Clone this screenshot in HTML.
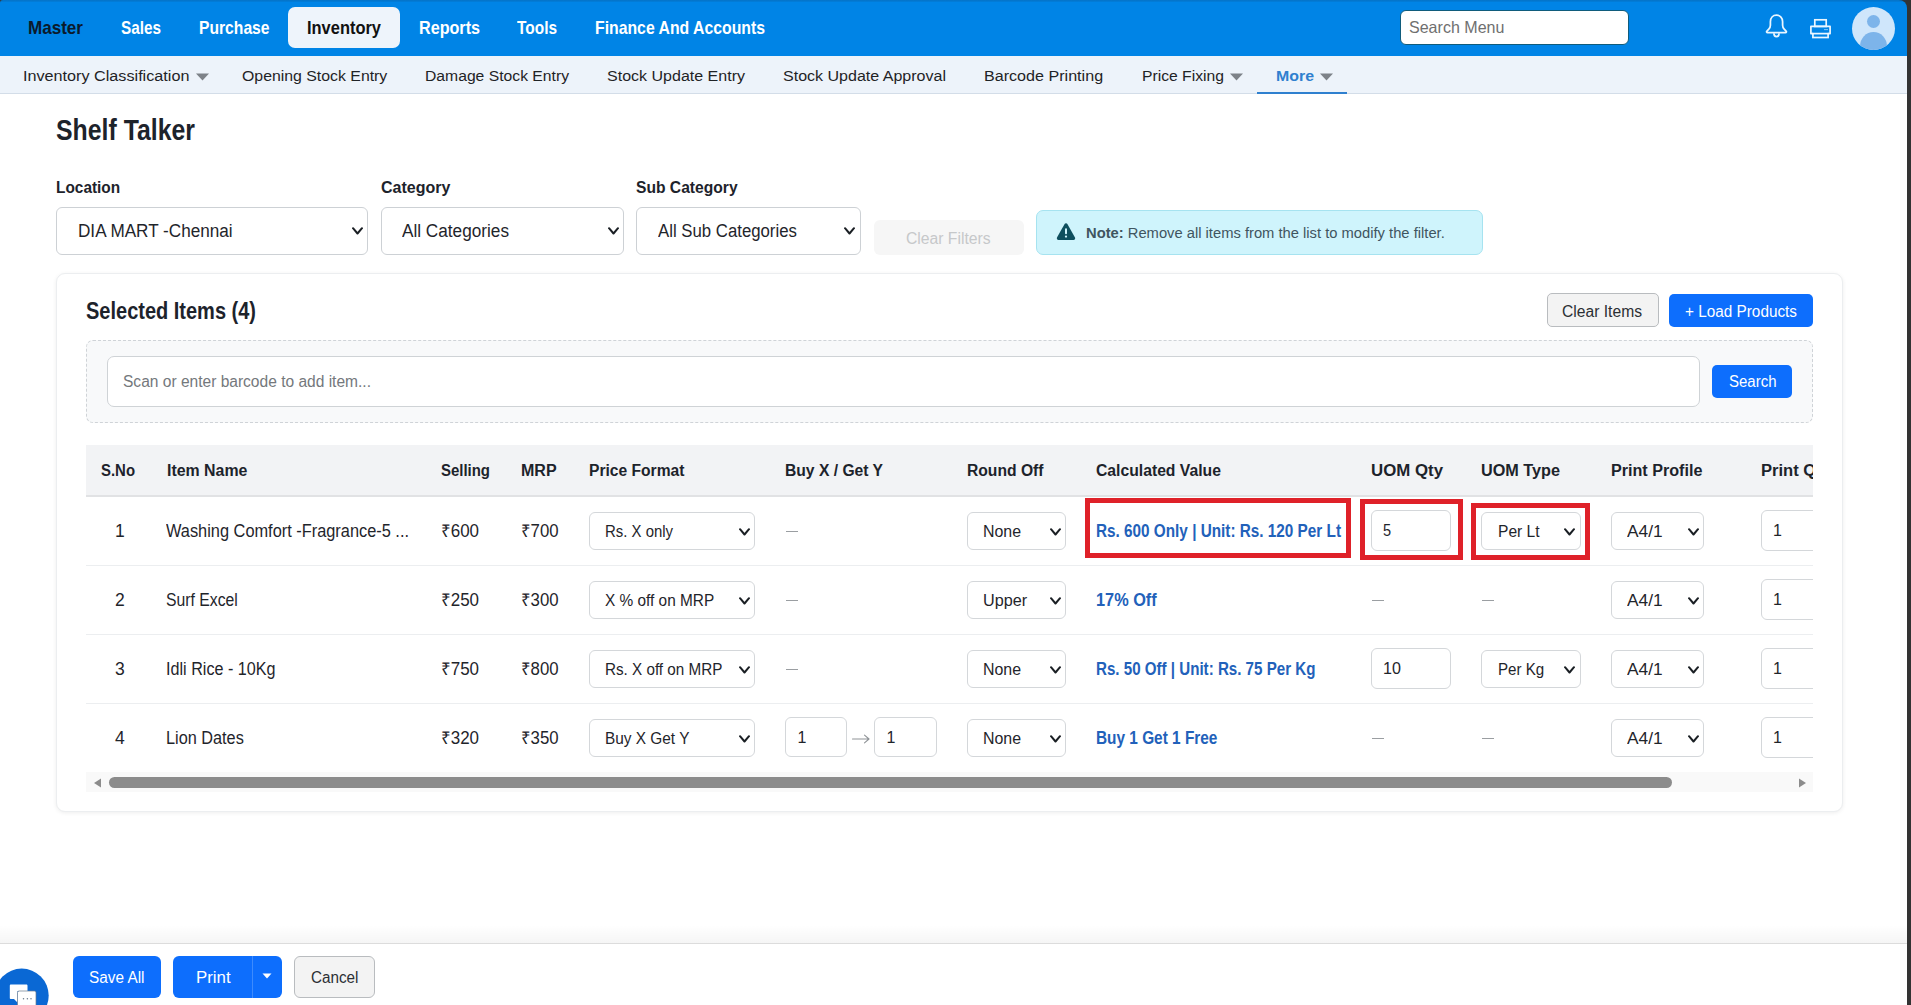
<!DOCTYPE html><html><head><meta charset="utf-8"><title>Shelf Talker</title>
<style>
html,body{margin:0;padding:0;}
body{width:1911px;height:1005px;overflow:hidden;position:relative;background:#fff;font-family:"Liberation Sans",sans-serif;}
.b{position:absolute;}
.t{position:absolute;white-space:nowrap;line-height:1;transform-origin:0 0;}
</style></head><body>
<div class="b" style="left:0px;top:0px;width:6px;height:6px;background:#3a3a3a;"></div>
<div class="b" style="left:1897px;top:0px;width:14px;height:12px;background:#333;"></div>
<div class="b" style="left:0px;top:0px;width:1907px;height:56px;background:#0084e6;border-top-right-radius:8px;border-top-left-radius:3px;"></div>
<div class="b" style="left:1907px;top:0px;width:4px;height:1005px;background:#333;"></div>
<div class="b" style="left:0px;top:0px;width:1907px;height:2px;background:linear-gradient(to bottom,rgba(20,60,100,0.25),rgba(20,60,100,0.08));border-top-right-radius:8px;"></div>
<div class="b" style="left:288px;top:7px;width:112px;height:41px;background:#eef4fb;border-radius:7px;"></div>
<div class="t" style="left: 28px; top: 19.34px; font-size: 18.5px; font-weight: 700; color: rgb(11, 26, 44); transform: scaleX(0.9222);">Master</div>
<div class="t" style="left: 121px; top: 19.34px; font-size: 18.5px; font-weight: 700; color: rgb(255, 255, 255); transform: scaleX(0.8271);">Sales</div>
<div class="t" style="left: 198.5px; top: 19.34px; font-size: 18.5px; font-weight: 700; color: rgb(255, 255, 255); transform: scaleX(0.8464);">Purchase</div>
<div class="t" style="left: 307px; top: 19.34px; font-size: 18.5px; font-weight: 700; color: rgb(17, 17, 17); transform: scaleX(0.8886);">Inventory</div>
<div class="t" style="left: 419px; top: 19.34px; font-size: 18.5px; font-weight: 700; color: rgb(255, 255, 255); transform: scaleX(0.8726);">Reports</div>
<div class="t" style="left: 517px; top: 19.34px; font-size: 18.5px; font-weight: 700; color: rgb(255, 255, 255); transform: scaleX(0.8339);">Tools</div>
<div class="t" style="left: 595px; top: 19.34px; font-size: 18.5px; font-weight: 700; color: rgb(255, 255, 255); transform: scaleX(0.8539);">Finance And Accounts</div>
<div class="b" style="left:1400px;top:10px;width:228.5px;height:34.5px;background:#fff;border:1.3px solid #105c7c;border-radius:6px;box-sizing:border-box;"></div>
<div class="t" style="left: 1408.6px; top: 19.43px; font-size: 16.5px; font-weight: 400; color: rgb(111, 111, 111); transform: scaleX(0.9721);">Search Menu</div>
<svg class="b" style="left:1763px;top:13px" width="27" height="27" viewBox="0 0 27 27"><path d="M13.5 2.2c-3.7 0-6.1 2.9-6.1 6.5v3.6c0 1.4-.6 2.8-1.6 3.9l-1.9 2c-.6.6-.2 1.4.6 1.4h18c.8 0 1.2-.8.6-1.4l-1.9-2c-1-1.1-1.6-2.5-1.6-3.9V8.7c0-3.6-2.4-6.5-6.1-6.5z" fill="none" stroke="#eaf6ff" stroke-width="1.75"></path><path d="M10.9 20.3c0 1.9 1.2 3.3 2.6 3.3s2.6-1.4 2.6-3.3" fill="none" stroke="#eaf6ff" stroke-width="1.75"></path></svg>
<svg class="b" style="left:1808px;top:17px" width="25" height="23" viewBox="0 0 25 23"><rect x="6.8" y="2.8" width="11.4" height="6.6" fill="none" stroke="#eaf6ff" stroke-width="1.7"></rect><path d="M5.2 16.6H2.9V9.4h19.2v7.2h-2.3" fill="none" stroke="#eaf6ff" stroke-width="1.7" stroke-linejoin="round"></path><rect x="4.9" y="16.6" width="15.2" height="3.9" fill="none" stroke="#eaf6ff" stroke-width="1.7"></rect><circle cx="17" cy="12.6" r=".7" fill="#eaf6ff"></circle><circle cx="19" cy="12.6" r=".7" fill="#eaf6ff"></circle></svg>
<div class="b" style="left:1852px;top:7px;width:43px;height:43px;border-radius:50%;overflow:hidden;background:#cfe6fb"><div class="b" style="left:14.9px;top:7.8px;width:13.2px;height:13.2px;border-radius:50%;background:#7db4ea"></div><div class="b" style="left:7.7px;top:25px;width:27.6px;height:29px;border-radius:50%;background:#7db4ea"></div></div>
<div class="b" style="left:0px;top:56px;width:1907px;height:37px;background:#edf3fa;"></div>
<div class="b" style="left:0px;top:93px;width:1907px;height:1px;background:#d3dde8;"></div>
<div class="t" style="left: 22.6px; top: 68.48px; font-size: 15.5px; font-weight: 400; color: rgb(31, 35, 38); transform: scaleX(1.0441);">Inventory Classification</div>
<div class="t" style="left: 241.7px; top: 68.48px; font-size: 15.5px; font-weight: 400; color: rgb(31, 35, 38); transform: scaleX(1.022);">Opening Stock Entry</div>
<div class="t" style="left: 425px; top: 68.48px; font-size: 15.5px; font-weight: 400; color: rgb(31, 35, 38); transform: scaleX(1.013);">Damage Stock Entry</div>
<div class="t" style="left: 607px; top: 68.48px; font-size: 15.5px; font-weight: 400; color: rgb(31, 35, 38); transform: scaleX(1.0333);">Stock Update Entry</div>
<div class="t" style="left: 783px; top: 68.48px; font-size: 15.5px; font-weight: 400; color: rgb(31, 35, 38); transform: scaleX(1.0337);">Stock Update Approval</div>
<div class="t" style="left: 984.4px; top: 68.48px; font-size: 15.5px; font-weight: 400; color: rgb(31, 35, 38); transform: scaleX(1.0393);">Barcode Printing</div>
<div class="t" style="left: 1142px; top: 68.48px; font-size: 15.5px; font-weight: 400; color: rgb(31, 35, 38); transform: scaleX(1.0127);">Price Fixing</div>
<div class="t" style="left: 1276px; top: 68.48px; font-size: 15.5px; font-weight: 700; color: rgb(47, 128, 207); transform: scaleX(1.0257);">More</div>
<svg class="b" style="left:195.5px;top:72.5px" width="13" height="8" viewBox="0 0 13 8"><path d="M0 0.5h13L6.5 7.5z" fill="#7d8288"></path></svg>
<svg class="b" style="left:1229.5px;top:72.5px" width="13" height="8" viewBox="0 0 13 8"><path d="M0 0.5h13L6.5 7.5z" fill="#7d8288"></path></svg>
<svg class="b" style="left:1320px;top:72.5px" width="13" height="8" viewBox="0 0 13 8"><path d="M0 0.5h13L6.5 7.5z" fill="#7d8288"></path></svg>
<div class="b" style="left:1257px;top:92px;width:90px;height:2px;background:#2f80cf;"></div>
<div class="t" style="left: 56px; top: 115.23px; font-size: 29.5px; font-weight: 700; color: rgb(29, 35, 43); transform: scaleX(0.8422);">Shelf Talker</div>
<div class="t" style="left: 55.8px; top: 179.33px; font-size: 16.5px; font-weight: 700; color: rgb(29, 35, 43); transform: scaleX(0.9338);">Location</div>
<div class="t" style="left: 381px; top: 179.33px; font-size: 16.5px; font-weight: 700; color: rgb(29, 35, 43); transform: scaleX(0.9702);">Category</div>
<div class="t" style="left: 636px; top: 179.33px; font-size: 16.5px; font-weight: 700; color: rgb(29, 35, 43); transform: scaleX(0.947);">Sub Category</div>
<div class="b" style="left:56px;top:207px;width:311.5px;height:47.5px;background:#fff;border:1px solid #cdd1d5;border-radius:6px;box-sizing:border-box;"></div>
<div class="t" style="left: 77.7px; top: 222.06px; font-size: 18px; font-weight: 400; color: rgb(31, 37, 43); transform: scaleX(0.9519);">DIA MART -Chennai</div>
<svg class="b" style="left:351.5px;top:226.5px" width="11" height="8" viewBox="0 0 11 8"><path d="M1 1.2 L5.5 6.5 L10 1.2" fill="none" stroke="#1a1f24" stroke-width="2.0" stroke-linecap="round" stroke-linejoin="round"></path></svg>
<div class="b" style="left:381px;top:207px;width:242.5px;height:47.5px;background:#fff;border:1px solid #cdd1d5;border-radius:6px;box-sizing:border-box;"></div>
<div class="t" style="left: 402px; top: 222.06px; font-size: 18px; font-weight: 400; color: rgb(31, 37, 43); transform: scaleX(0.9548);">All Categories</div>
<svg class="b" style="left:607.5px;top:226.5px" width="11" height="8" viewBox="0 0 11 8"><path d="M1 1.2 L5.5 6.5 L10 1.2" fill="none" stroke="#1a1f24" stroke-width="2.0" stroke-linecap="round" stroke-linejoin="round"></path></svg>
<div class="b" style="left:636px;top:207px;width:224.5px;height:47.5px;background:#fff;border:1px solid #cdd1d5;border-radius:6px;box-sizing:border-box;"></div>
<div class="t" style="left: 657.7px; top: 222.06px; font-size: 18px; font-weight: 400; color: rgb(31, 37, 43); transform: scaleX(0.9316);">All Sub Categories</div>
<svg class="b" style="left:844px;top:226.5px" width="11" height="8" viewBox="0 0 11 8"><path d="M1 1.2 L5.5 6.5 L10 1.2" fill="none" stroke="#1a1f24" stroke-width="2.0" stroke-linecap="round" stroke-linejoin="round"></path></svg>
<div class="b" style="left:873.5px;top:220px;width:150.5px;height:35px;background:#f6f6f6;border-radius:6px;"></div>
<div class="t" style="left: 906.4px; top: 231.06px; font-size: 16px; font-weight: 400; color: rgb(198, 200, 202); transform: scaleX(0.981);">Clear Filters</div>
<div class="b" style="left:1036px;top:210px;width:447px;height:44.5px;background:#cff4fc;border:1px solid #a6e3f0;border-radius:7px;box-sizing:border-box;"></div>
<svg class="b" style="left:1056px;top:222px" width="20" height="19" viewBox="0 0 20 19"><path d="M10 1.2c.6 0 1.1.3 1.4.8l7.6 13.6c.6 1.1-.1 2.4-1.4 2.4H2.4C1.1 18 .4 16.7 1 15.6L8.6 2c.3-.5.8-.8 1.4-.8z" fill="#0e4f5e"></path><rect x="9" y="6.3" width="2" height="6" rx="1" fill="#cff4fc"></rect><circle cx="10" cy="14.6" r="1.15" fill="#cff4fc"></circle></svg>
<div class="t" style="left: 1085.8px; top: 225.18px; font-size: 15.5px; font-weight: 400; color: rgb(63, 85, 96); transform: scaleX(0.951);"><b>Note:</b> Remove all items from the list to modify the filter.</div>
<div class="b" style="left:56px;top:273px;width:1787px;height:539px;background:#fff;border:1px solid #eceef0;border-radius:9px;box-sizing:border-box;box-shadow:0 1px 4px rgba(0,0,0,0.07);"></div>
<div class="t" style="left: 86px; top: 298.58px; font-size: 24px; font-weight: 700; color: rgb(29, 35, 43); transform: scaleX(0.833);">Selected Items (4)</div>
<div class="b" style="left:1546.5px;top:293px;width:112.5px;height:33.5px;background:#f3f3f3;border:1px solid #b9bcbf;border-radius:5px;box-sizing:border-box;"></div>
<div class="t" style="left: 1562px; top: 303.96px; font-size: 16px; font-weight: 400; color: rgb(43, 47, 51); transform: scaleX(0.978);">Clear Items</div>
<div class="b" style="left:1669px;top:294px;width:144px;height:33px;background:#0d6efd;border-radius:5px;"></div>
<div class="t" style="left: 1685px; top: 303.56px; font-size: 16px; font-weight: 400; color: rgb(255, 255, 255); transform: scaleX(0.9575);">+ Load Products</div>
<div class="b" style="left:86px;top:340px;width:1727px;height:82.5px;background:#f8f9fa;border:1px dashed #cfd3d7;border-radius:7px;box-sizing:border-box;"></div>
<div class="b" style="left:107px;top:356px;width:1593px;height:51px;background:#fff;border:1px solid #cfd3d6;border-radius:7px;box-sizing:border-box;"></div>
<div class="t" style="left: 123px; top: 373.96px; font-size: 16px; font-weight: 400; color: rgb(116, 120, 124); transform: scaleX(0.9715);">Scan or enter barcode to add item...</div>
<div class="b" style="left:1712px;top:365px;width:80px;height:33px;background:#0d6efd;border-radius:5px;"></div>
<div class="t" style="left: 1728.5px; top: 374.06px; font-size: 16px; font-weight: 400; color: rgb(255, 255, 255); transform: scaleX(0.9368);">Search</div>
<div class="b" style="left:86px;top:445px;width:1727px;height:347px;overflow:hidden">
<div class="b" style="left:-86px;top:-445px;width:1911px;height:1005px">
<div class="b" style="left:86px;top:445px;width:1727px;height:50px;background:#f2f3f5;"></div>
<div class="b" style="left:86px;top:495px;width:1727px;height:2px;background:#e1e2e4;"></div>
<div class="b" style="left:86px;top:565px;width:1727px;height:1px;background:#eceef0;"></div>
<div class="b" style="left:86px;top:634px;width:1727px;height:1px;background:#eceef0;"></div>
<div class="b" style="left:86px;top:703px;width:1727px;height:1px;background:#eceef0;"></div>
<div class="b" style="left:86px;top:772px;width:1727px;height:1px;background:#eceef0;"></div>
<div class="t" style="left: 101px; top: 463.06px; font-size: 16px; font-weight: 700; color: rgb(29, 35, 43); transform: scaleX(0.9327);">S.No</div>
<div class="t" style="left: 166.6px; top: 463.06px; font-size: 16px; font-weight: 700; color: rgb(29, 35, 43); transform: scaleX(0.9936);">Item Name</div>
<div class="t" style="left: 441px; top: 463.06px; font-size: 16px; font-weight: 700; color: rgb(29, 35, 43); transform: scaleX(0.9342);">Selling</div>
<div class="t" style="left: 521px; top: 463.06px; font-size: 16px; font-weight: 700; color: rgb(29, 35, 43); transform: scaleX(1.0011);">MRP</div>
<div class="t" style="left: 589px; top: 463.06px; font-size: 16px; font-weight: 700; color: rgb(29, 35, 43); transform: scaleX(0.9753);">Price Format</div>
<div class="t" style="left: 785px; top: 463.06px; font-size: 16px; font-weight: 700; color: rgb(29, 35, 43); transform: scaleX(0.9782);">Buy X / Get Y</div>
<div class="t" style="left: 967px; top: 463.06px; font-size: 16px; font-weight: 700; color: rgb(29, 35, 43); transform: scaleX(0.9782);">Round Off</div>
<div class="t" style="left: 1095.8px; top: 463.06px; font-size: 16px; font-weight: 700; color: rgb(29, 35, 43); transform: scaleX(0.9821);">Calculated Value</div>
<div class="t" style="left: 1371px; top: 463.06px; font-size: 16px; font-weight: 700; color: rgb(29, 35, 43); transform: scaleX(1.0518);">UOM Qty</div>
<div class="t" style="left: 1481px; top: 463.06px; font-size: 16px; font-weight: 700; color: rgb(29, 35, 43); transform: scaleX(1.0136);">UOM Type</div>
<div class="t" style="left: 1611px; top: 463.06px; font-size: 16px; font-weight: 700; color: rgb(29, 35, 43); transform: scaleX(1.0079);">Print Profile</div>
<div class="t" style="left: 1761px; top: 463.06px; font-size: 16px; font-weight: 700; color: rgb(29, 35, 43); transform: scaleX(1.0361);">Print Qty</div>
<div class="t" style="left:115px;top:522.79px;font-size:17.5px;font-weight:400;color:#1f252b;">1</div>
<div class="t" style="left: 166px; top: 522.79px; font-size: 17.5px; font-weight: 400; color: rgb(31, 37, 43); transform: scaleX(0.9346);">Washing Comfort -Fragrance-5 ...</div>
<div class="t" style="left: 441px; top: 522.79px; font-size: 17.5px; font-weight: 400; color: rgb(31, 37, 43); transform: scaleX(0.9693);">₹600</div>
<div class="t" style="left: 521px; top: 522.79px; font-size: 17.5px; font-weight: 400; color: rgb(31, 37, 43); transform: scaleX(0.9591);">₹700</div>
<div class="b" style="left:589px;top:512px;width:166px;height:38px;background:#fff;border:1px solid #d4d7da;border-radius:6px;box-sizing:border-box;"></div>
<div class="t" style="left: 605.4px; top: 523.21px; font-size: 17px; font-weight: 400; color: rgb(31, 37, 43); transform: scaleX(0.8789);">Rs. X only</div>
<svg class="b" style="left:738.5px;top:527.5px" width="11" height="8" viewBox="0 0 11 8"><path d="M1 1.2 L5.5 6.5 L10 1.2" fill="none" stroke="#1a1f24" stroke-width="2.0" stroke-linecap="round" stroke-linejoin="round"></path></svg>
<div class="b" style="left:786px;top:531px;width:12px;height:1px;background:#9a9ea2;"></div>
<div class="b" style="left:967px;top:512px;width:99px;height:38px;background:#fff;border:1px solid #d4d7da;border-radius:6px;box-sizing:border-box;"></div>
<div class="t" style="left: 983.4px; top: 523.21px; font-size: 17px; font-weight: 400; color: rgb(31, 37, 43); transform: scaleX(0.9375);">None</div>
<svg class="b" style="left:1049.5px;top:527.5px" width="11" height="8" viewBox="0 0 11 8"><path d="M1 1.2 L5.5 6.5 L10 1.2" fill="none" stroke="#1a1f24" stroke-width="2.0" stroke-linecap="round" stroke-linejoin="round"></path></svg>
<div class="t" style="left: 1096px; top: 522.79px; font-size: 17.5px; font-weight: 700; color: rgb(34, 97, 186); transform: scaleX(0.8746);">Rs. 600 Only | Unit: Rs. 120 Per Lt</div>
<div class="b" style="left:1371px;top:510px;width:80px;height:41px;background:#fff;border:1px solid #d4d7da;border-radius:6px;box-sizing:border-box;"></div>
<div class="t" style="left: 1382.6px; top: 522.56px; font-size: 16px; font-weight: 400; color: rgb(31, 37, 43); transform: scaleX(0.9095);">5</div>
<div class="b" style="left:1481px;top:512px;width:100px;height:38px;background:#fff;border:1px solid #d4d7da;border-radius:6px;box-sizing:border-box;"></div>
<div class="t" style="left: 1497.7px; top: 523.21px; font-size: 17px; font-weight: 400; color: rgb(31, 37, 43); transform: scaleX(0.9171);">Per Lt</div>
<svg class="b" style="left:1564px;top:527.5px" width="11" height="8" viewBox="0 0 11 8"><path d="M1 1.2 L5.5 6.5 L10 1.2" fill="none" stroke="#1a1f24" stroke-width="2.0" stroke-linecap="round" stroke-linejoin="round"></path></svg>
<div class="b" style="left:1611px;top:512px;width:93px;height:38px;background:#fff;border:1px solid #d4d7da;border-radius:6px;box-sizing:border-box;"></div>
<div class="t" style="left: 1627px; top: 523.21px; font-size: 17px; font-weight: 400; color: rgb(31, 37, 43); transform: scaleX(1.0176);">A4/1</div>
<svg class="b" style="left:1687.5px;top:527.5px" width="11" height="8" viewBox="0 0 11 8"><path d="M1 1.2 L5.5 6.5 L10 1.2" fill="none" stroke="#1a1f24" stroke-width="2.0" stroke-linecap="round" stroke-linejoin="round"></path></svg>
<div class="b" style="left:1761px;top:510px;width:89px;height:41px;background:#fff;border:1px solid #d4d7da;border-radius:6px;box-sizing:border-box;"></div>
<div class="t" style="left:1773px;top:522.56px;font-size:16px;font-weight:400;color:#1f252b;">1</div>
<div class="t" style="left:115px;top:591.79px;font-size:17.5px;font-weight:400;color:#1f252b;">2</div>
<div class="t" style="left: 166px; top: 591.79px; font-size: 17.5px; font-weight: 400; color: rgb(31, 37, 43); transform: scaleX(0.9003);">Surf Excel</div>
<div class="t" style="left: 441px; top: 591.79px; font-size: 17.5px; font-weight: 400; color: rgb(31, 37, 43); transform: scaleX(0.9693);">₹250</div>
<div class="t" style="left: 521px; top: 591.79px; font-size: 17.5px; font-weight: 400; color: rgb(31, 37, 43); transform: scaleX(0.9591);">₹300</div>
<div class="b" style="left:589px;top:581px;width:166px;height:38px;background:#fff;border:1px solid #d4d7da;border-radius:6px;box-sizing:border-box;"></div>
<div class="t" style="left: 605.4px; top: 592.21px; font-size: 17px; font-weight: 400; color: rgb(31, 37, 43); transform: scaleX(0.9052);">X % off on MRP</div>
<svg class="b" style="left:738.5px;top:596.5px" width="11" height="8" viewBox="0 0 11 8"><path d="M1 1.2 L5.5 6.5 L10 1.2" fill="none" stroke="#1a1f24" stroke-width="2.0" stroke-linecap="round" stroke-linejoin="round"></path></svg>
<div class="b" style="left:786px;top:600px;width:12px;height:1px;background:#9a9ea2;"></div>
<div class="b" style="left:967px;top:581px;width:99px;height:38px;background:#fff;border:1px solid #d4d7da;border-radius:6px;box-sizing:border-box;"></div>
<div class="t" style="left: 983.4px; top: 592.21px; font-size: 17px; font-weight: 400; color: rgb(31, 37, 43); transform: scaleX(0.9522);">Upper</div>
<svg class="b" style="left:1049.5px;top:596.5px" width="11" height="8" viewBox="0 0 11 8"><path d="M1 1.2 L5.5 6.5 L10 1.2" fill="none" stroke="#1a1f24" stroke-width="2.0" stroke-linecap="round" stroke-linejoin="round"></path></svg>
<div class="t" style="left: 1096px; top: 591.79px; font-size: 17.5px; font-weight: 700; color: rgb(34, 97, 186); transform: scaleX(0.9316);">17% Off</div>
<div class="b" style="left:1372px;top:600px;width:12px;height:1px;background:#9a9ea2;"></div>
<div class="b" style="left:1482px;top:600px;width:12px;height:1px;background:#9a9ea2;"></div>
<div class="b" style="left:1611px;top:581px;width:93px;height:38px;background:#fff;border:1px solid #d4d7da;border-radius:6px;box-sizing:border-box;"></div>
<div class="t" style="left: 1627px; top: 592.21px; font-size: 17px; font-weight: 400; color: rgb(31, 37, 43); transform: scaleX(1.0176);">A4/1</div>
<svg class="b" style="left:1687.5px;top:596.5px" width="11" height="8" viewBox="0 0 11 8"><path d="M1 1.2 L5.5 6.5 L10 1.2" fill="none" stroke="#1a1f24" stroke-width="2.0" stroke-linecap="round" stroke-linejoin="round"></path></svg>
<div class="b" style="left:1761px;top:579px;width:89px;height:41px;background:#fff;border:1px solid #d4d7da;border-radius:6px;box-sizing:border-box;"></div>
<div class="t" style="left:1773px;top:591.56px;font-size:16px;font-weight:400;color:#1f252b;">1</div>
<div class="t" style="left:115px;top:660.79px;font-size:17.5px;font-weight:400;color:#1f252b;">3</div>
<div class="t" style="left: 166px; top: 660.79px; font-size: 17.5px; font-weight: 400; color: rgb(31, 37, 43); transform: scaleX(0.9227);">Idli Rice - 10Kg</div>
<div class="t" style="left: 441px; top: 660.79px; font-size: 17.5px; font-weight: 400; color: rgb(31, 37, 43); transform: scaleX(0.9693);">₹750</div>
<div class="t" style="left: 521px; top: 660.79px; font-size: 17.5px; font-weight: 400; color: rgb(31, 37, 43); transform: scaleX(0.9591);">₹800</div>
<div class="b" style="left:589px;top:650px;width:166px;height:38px;background:#fff;border:1px solid #d4d7da;border-radius:6px;box-sizing:border-box;"></div>
<div class="t" style="left: 605.4px; top: 661.21px; font-size: 17px; font-weight: 400; color: rgb(31, 37, 43); transform: scaleX(0.8953);">Rs. X off on MRP</div>
<svg class="b" style="left:738.5px;top:665.5px" width="11" height="8" viewBox="0 0 11 8"><path d="M1 1.2 L5.5 6.5 L10 1.2" fill="none" stroke="#1a1f24" stroke-width="2.0" stroke-linecap="round" stroke-linejoin="round"></path></svg>
<div class="b" style="left:786px;top:669px;width:12px;height:1px;background:#9a9ea2;"></div>
<div class="b" style="left:967px;top:650px;width:99px;height:38px;background:#fff;border:1px solid #d4d7da;border-radius:6px;box-sizing:border-box;"></div>
<div class="t" style="left: 983.4px; top: 661.21px; font-size: 17px; font-weight: 400; color: rgb(31, 37, 43); transform: scaleX(0.9375);">None</div>
<svg class="b" style="left:1049.5px;top:665.5px" width="11" height="8" viewBox="0 0 11 8"><path d="M1 1.2 L5.5 6.5 L10 1.2" fill="none" stroke="#1a1f24" stroke-width="2.0" stroke-linecap="round" stroke-linejoin="round"></path></svg>
<div class="t" style="left: 1096px; top: 660.79px; font-size: 17.5px; font-weight: 700; color: rgb(34, 97, 186); transform: scaleX(0.8643);">Rs. 50 Off | Unit: Rs. 75 Per Kg</div>
<div class="b" style="left:1371px;top:648px;width:80px;height:41px;background:#fff;border:1px solid #d4d7da;border-radius:6px;box-sizing:border-box;"></div>
<div class="t" style="left: 1382.6px; top: 660.56px; font-size: 16px; font-weight: 400; color: rgb(31, 37, 43); transform: scaleX(1.0058);">10</div>
<div class="b" style="left:1481px;top:650px;width:100px;height:38px;background:#fff;border:1px solid #d4d7da;border-radius:6px;box-sizing:border-box;"></div>
<div class="t" style="left: 1497.7px; top: 661.21px; font-size: 17px; font-weight: 400; color: rgb(31, 37, 43); transform: scaleX(0.8907);">Per Kg</div>
<svg class="b" style="left:1564px;top:665.5px" width="11" height="8" viewBox="0 0 11 8"><path d="M1 1.2 L5.5 6.5 L10 1.2" fill="none" stroke="#1a1f24" stroke-width="2.0" stroke-linecap="round" stroke-linejoin="round"></path></svg>
<div class="b" style="left:1611px;top:650px;width:93px;height:38px;background:#fff;border:1px solid #d4d7da;border-radius:6px;box-sizing:border-box;"></div>
<div class="t" style="left: 1627px; top: 661.21px; font-size: 17px; font-weight: 400; color: rgb(31, 37, 43); transform: scaleX(1.0176);">A4/1</div>
<svg class="b" style="left:1687.5px;top:665.5px" width="11" height="8" viewBox="0 0 11 8"><path d="M1 1.2 L5.5 6.5 L10 1.2" fill="none" stroke="#1a1f24" stroke-width="2.0" stroke-linecap="round" stroke-linejoin="round"></path></svg>
<div class="b" style="left:1761px;top:648px;width:89px;height:41px;background:#fff;border:1px solid #d4d7da;border-radius:6px;box-sizing:border-box;"></div>
<div class="t" style="left:1773px;top:660.56px;font-size:16px;font-weight:400;color:#1f252b;">1</div>
<div class="t" style="left:115px;top:729.79px;font-size:17.5px;font-weight:400;color:#1f252b;">4</div>
<div class="t" style="left: 166px; top: 729.79px; font-size: 17.5px; font-weight: 400; color: rgb(31, 37, 43); transform: scaleX(0.9298);">Lion Dates</div>
<div class="t" style="left: 441px; top: 729.79px; font-size: 17.5px; font-weight: 400; color: rgb(31, 37, 43); transform: scaleX(0.9693);">₹320</div>
<div class="t" style="left: 521px; top: 729.79px; font-size: 17.5px; font-weight: 400; color: rgb(31, 37, 43); transform: scaleX(0.9591);">₹350</div>
<div class="b" style="left:589px;top:719px;width:166px;height:38px;background:#fff;border:1px solid #d4d7da;border-radius:6px;box-sizing:border-box;"></div>
<div class="t" style="left: 605.4px; top: 730.21px; font-size: 17px; font-weight: 400; color: rgb(31, 37, 43); transform: scaleX(0.9052);">Buy X Get Y</div>
<svg class="b" style="left:738.5px;top:734.5px" width="11" height="8" viewBox="0 0 11 8"><path d="M1 1.2 L5.5 6.5 L10 1.2" fill="none" stroke="#1a1f24" stroke-width="2.0" stroke-linecap="round" stroke-linejoin="round"></path></svg>
<div class="b" style="left:785px;top:717px;width:62px;height:40px;background:#fff;border:1px solid #d4d7da;border-radius:6px;box-sizing:border-box;"></div>
<div class="t" style="left:797.5px;top:730.06px;font-size:16px;font-weight:400;color:#1f252b;">1</div>
<svg class="b" style="left:851px;top:734px" width="20" height="10" viewBox="0 0 20 10"><path d="M1.5 5H18M13.5 1.2L18 5l-4.5 3.8" fill="none" stroke="#8f9397" stroke-width="1.1" stroke-linecap="round" stroke-linejoin="round"></path></svg>
<div class="b" style="left:874px;top:717px;width:63px;height:40px;background:#fff;border:1px solid #d4d7da;border-radius:6px;box-sizing:border-box;"></div>
<div class="t" style="left:886.5px;top:730.06px;font-size:16px;font-weight:400;color:#1f252b;">1</div>
<div class="b" style="left:967px;top:719px;width:99px;height:38px;background:#fff;border:1px solid #d4d7da;border-radius:6px;box-sizing:border-box;"></div>
<div class="t" style="left: 983.4px; top: 730.21px; font-size: 17px; font-weight: 400; color: rgb(31, 37, 43); transform: scaleX(0.9375);">None</div>
<svg class="b" style="left:1049.5px;top:734.5px" width="11" height="8" viewBox="0 0 11 8"><path d="M1 1.2 L5.5 6.5 L10 1.2" fill="none" stroke="#1a1f24" stroke-width="2.0" stroke-linecap="round" stroke-linejoin="round"></path></svg>
<div class="t" style="left: 1096px; top: 729.79px; font-size: 17.5px; font-weight: 700; color: rgb(34, 97, 186); transform: scaleX(0.8789);">Buy 1 Get 1 Free</div>
<div class="b" style="left:1372px;top:738px;width:12px;height:1px;background:#9a9ea2;"></div>
<div class="b" style="left:1482px;top:738px;width:12px;height:1px;background:#9a9ea2;"></div>
<div class="b" style="left:1611px;top:719px;width:93px;height:38px;background:#fff;border:1px solid #d4d7da;border-radius:6px;box-sizing:border-box;"></div>
<div class="t" style="left: 1627px; top: 730.21px; font-size: 17px; font-weight: 400; color: rgb(31, 37, 43); transform: scaleX(1.0176);">A4/1</div>
<svg class="b" style="left:1687.5px;top:734.5px" width="11" height="8" viewBox="0 0 11 8"><path d="M1 1.2 L5.5 6.5 L10 1.2" fill="none" stroke="#1a1f24" stroke-width="2.0" stroke-linecap="round" stroke-linejoin="round"></path></svg>
<div class="b" style="left:1761px;top:717px;width:89px;height:41px;background:#fff;border:1px solid #d4d7da;border-radius:6px;box-sizing:border-box;"></div>
<div class="t" style="left:1773px;top:729.56px;font-size:16px;font-weight:400;color:#1f252b;">1</div>
<div class="b" style="left:1085px;top:498px;width:266px;height:60px;border:5px solid #df2129;box-sizing:border-box;"></div>
<div class="b" style="left:1360px;top:499px;width:103px;height:61px;border:5px solid #df2129;box-sizing:border-box;"></div>
<div class="b" style="left:1471px;top:503px;width:119px;height:57px;border:5px solid #df2129;box-sizing:border-box;"></div>
<div class="b" style="left:86px;top:772px;width:1727px;height:20px;background:#f9f9f9;"></div>
<div class="b" style="left:109px;top:777px;width:1563px;height:11px;background:#8c8c8c;border-radius:6px;"></div>
<svg class="b" style="left:93px;top:778px" width="9" height="10" viewBox="0 0 9 10"><path d="M8 0.5v9L1 5z" fill="#8c8c8c"></path></svg>
<svg class="b" style="left:1798px;top:778px" width="9" height="10" viewBox="0 0 9 10"><path d="M1 0.5v9L8 5z" fill="#8c8c8c"></path></svg>
</div></div>
<div class="b" style="left:0px;top:925px;width:1907px;height:18px;background:linear-gradient(to bottom,rgba(0,0,0,0),rgba(0,0,0,0.04));"></div>
<div class="b" style="left:0px;top:943px;width:1907px;height:1px;background:#dcdcdc;"></div>
<div class="b" style="left:73px;top:956px;width:88px;height:41.5px;background:#0d6efd;border-radius:6px;"></div>
<div class="t" style="left: 89px; top: 969.86px; font-size: 16px; font-weight: 400; color: rgb(255, 255, 255); transform: scaleX(0.96);">Save All</div>
<div class="b" style="left:173px;top:956px;width:109px;height:41.5px;background:#0d6efd;border-radius:6px;"></div>
<div class="b" style="left:252px;top:956px;width:1px;height:41.5px;background:#3d8bfd;"></div>
<div class="t" style="left: 196px; top: 969.86px; font-size: 16px; font-weight: 400; color: rgb(255, 255, 255); transform: scaleX(1.0515);">Print</div>
<svg class="b" style="left:262px;top:973px" width="10" height="6" viewBox="0 0 10 6"><path d="M0.5 0.5h9L5 5.5z" fill="#fff"></path></svg>
<div class="b" style="left:294px;top:956px;width:81px;height:41.5px;background:#f3f3f3;border:1px solid #b9bcbf;border-radius:6px;box-sizing:border-box;"></div>
<div class="t" style="left: 311px; top: 969.86px; font-size: 16px; font-weight: 400; color: rgb(43, 47, 51); transform: scaleX(0.9536);">Cancel</div>
<svg class="b" style="left:-6px;top:968px" width="56" height="56" viewBox="0 0 56 56"><circle cx="27.7" cy="27.6" r="27" fill="#0a68d4"></circle><path d="M15.8 17.5c0-.6.5-1.1 1.1-1.1h15.5c.6 0 1.1.5 1.1 1.1V23H23.5v11.5L20 31h-3.1c-.6 0-1.1-.5-1.1-1.1z" fill="#fff"></path><rect x="23.5" y="23" width="18.5" height="16" rx="1.6" fill="#fff" stroke="#6b7b8c" stroke-width=".7"></rect><circle cx="29.5" cy="30.8" r=".75" fill="#6b7b8c"></circle><circle cx="33.4" cy="30.8" r=".75" fill="#6b7b8c"></circle><circle cx="37" cy="30.8" r=".75" fill="#6b7b8c"></circle></svg>

</body></html>
